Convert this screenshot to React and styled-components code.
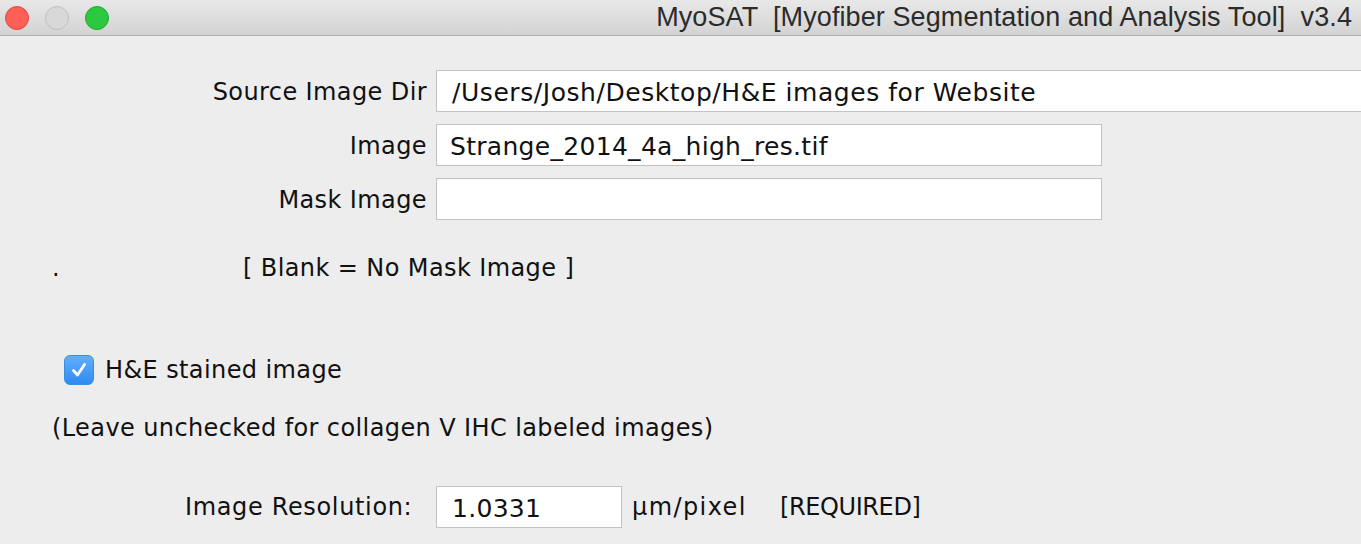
import React from 'react';
import styled, { createGlobalStyle } from 'styled-components';

const GlobalStyle = createGlobalStyle`
  html, body {
    margin: 0;
    padding: 0;
    background: #ededed;
    overflow: hidden;
  }
  body {
    font-family: 'DejaVu Sans', 'Open Sans', sans-serif;
    color: #111111;
  }
`;

const Window = styled.div`
  width: 1361px;
  height: 544px;
  display: flex;
  flex-direction: column;
  background: #ededed;
  overflow: hidden;
`;

const TitleBar = styled.div`
  height: 35px;
  flex-shrink: 0;
  display: flex;
  align-items: center;
  padding: 0 9px 0 5px;
  background: linear-gradient(#e8e8e8, #d3d3d3);
  border-bottom: 1px solid #b1b1b1;
`;

const Lights = styled.div`
  display: flex;
  gap: 16px;
`;

const Light = styled.span`
  width: 22px;
  height: 22px;
  border-radius: 50%;
  background: ${(p) => p.color};
  border: 1px solid ${(p) => p.edge};
`;

const Title = styled.div`
  margin-left: auto;
  font-family: 'Liberation Sans', Arial, sans-serif;
  font-size: 27px;
  letter-spacing: 0.1px;
  color: #2b2b2b;
  white-space: pre;
`;

const Content = styled.div`
  display: flex;
  flex-direction: column;
  padding-top: 34px;
  font-size: 24px;
  letter-spacing: 0.4px;
`;

const Form = styled.div`
  display: grid;
  grid-template-columns: 427px 1fr;
  column-gap: 9px;
  row-gap: 12px;
`;

const Label = styled.label`
  display: flex;
  align-items: center;
  justify-content: flex-end;
  padding-top: 2px;
  white-space: nowrap;
`;

const Field = styled.div`
  box-sizing: border-box;
  height: 42px;
  width: ${(p) => p.width || '666px'};
  display: flex;
  align-items: center;
  padding: 2px 0 0 ${(p) => p.indent || '13px'};
  font-size: 25px;
  letter-spacing: ${(p) => p.spacing || '0.3px'};
  background: #ffffff;
  border: 1px solid #c2c2c2;
  white-space: nowrap;
  overflow: hidden;
`;

const Note = styled.div`
  display: flex;
  align-items: center;
  height: 30px;
  margin-top: ${(p) => p.top}px;
  padding-left: 52px;
  white-space: nowrap;
`;

const Dot = styled.span`
  width: 191px;
`;

const CheckRow = styled.div`
  display: flex;
  align-items: center;
  gap: 11px;
  height: 30px;
  margin-top: 72px;
  padding-left: 64px;
`;

const Box = styled.span`
  width: 30px;
  height: 30px;
  box-sizing: border-box;
  border-radius: 6px;
  background: linear-gradient(#62aeff, #2f8bf2);
  border: 1px solid #3a8ee8;
  display: flex;
  align-items: center;
  justify-content: center;
`;

const ResRow = styled.div`
  display: flex;
  align-items: center;
  margin-top: 43px;
  padding-left: 185px;
  white-space: nowrap;
`;

const ResLabel = styled.span`
  width: 251px;
  letter-spacing: 0.65px;
`;

const Unit = styled.span`
  margin-left: 10px;
  width: 148px;
  letter-spacing: 1.4px;
`;

const Required = styled.span`
  letter-spacing: -0.4px;
`;

export default function App() {
  return (
    <Window>
      <GlobalStyle />
      <TitleBar>
        <Lights>
          <Light color="#fe5f57" edge="#e2463f" />
          <Light color="#d8d8d8" edge="#c0c0c0" />
          <Light color="#2bc840" edge="#1faa30" />
        </Lights>
        <Title>MyoSAT  [Myofiber Segmentation and Analysis Tool]  v3.4</Title>
      </TitleBar>
      <Content>
        <Form>
          <Label>Source Image Dir</Label>
          <Field width="960px" indent="15px" spacing="0.55px">/Users/Josh/Desktop/H&amp;E images for Website</Field>
          <Label>Image</Label>
          <Field>Strange_2014_4a_high_res.tif</Field>
          <Label>Mask Image</Label>
          <Field />
        </Form>
        <Note top={33}>
          <Dot>.</Dot>
          [ Blank = No Mask Image ]
        </Note>
        <CheckRow>
          <Box>
            <svg width="18" height="18" viewBox="0 0 18 18">
              <path d="M3.5 9.5 L7.5 14 L14.5 3.5" fill="none" stroke="#fff" strokeWidth="2.8" strokeLinecap="round" strokeLinejoin="round" />
            </svg>
          </Box>
          H&amp;E stained image
        </CheckRow>
        <Note top={28}>(Leave unchecked for collagen V IHC labeled images)</Note>
        <ResRow>
          <ResLabel>Image Resolution:</ResLabel>
          <Field width="186px" indent="15px">1.0331</Field>
          <Unit>μm/pixel</Unit>
          <Required>[REQUIRED]</Required>
        </ResRow>
      </Content>
    </Window>
  );
}
